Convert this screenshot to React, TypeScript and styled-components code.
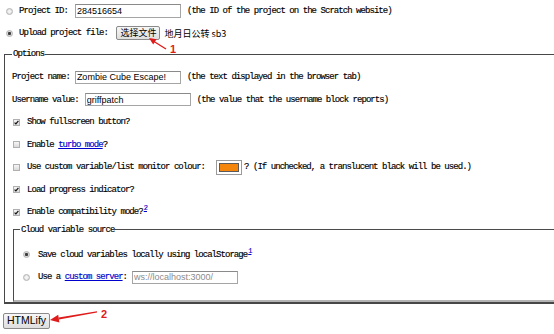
import React from 'react';
import styled, { createGlobalStyle } from 'styled-components';

const GlobalStyle = createGlobalStyle`
    html, body {
        margin: 0;
        padding: 0;
        overflow: hidden;
        background: #fff;
    }
    body {
        font-family: "Liberation Mono", monospace;
        font-size: 9px;
        letter-spacing: -0.95px;
        color: #000;
        -webkit-text-stroke: 0.15px #000;
    }
`;

const Page = styled.div`
    position: relative;
    width: 640px;
    height: 334px;
`;

const Row = styled.div<{ $h?: number }>`
    display: flex;
    align-items: center;
    height: ${(p) => p.$h ?? 22.5}px;
    white-space: nowrap;
`;

const Label = styled.span`
    white-space: pre;
`;

const Radio = styled.span<{ $checked?: boolean; $ml?: number; $mr?: number }>`
    display: inline-block;
    box-sizing: border-box;
    width: 7px;
    height: 7px;
    border-radius: 50%;
    border: 1px solid #b4b4b4;
    margin: 0 ${(p) => p.$mr ?? 6}px 0 ${(p) => p.$ml ?? 6}px;
    background: ${(p) =>
        p.$checked
            ? 'radial-gradient(circle, #3c3c3c 0 1.3px, #d8d8d8 1.8px)'
            : 'radial-gradient(circle, #f4f4f4 0 1px, #d6d6d6 3px)'};
`;

const Box = styled.span`
    display: inline-flex;
    align-items: center;
    justify-content: center;
    box-sizing: border-box;
    width: 7px;
    height: 7px;
    border: 1px solid #b0b0b0;
    background: linear-gradient(#f6f6f6, #dadada);
    margin: 0 7px 0 1px;
`;

const Check = ({ checked }: { checked?: boolean }) => (
    <Box>
        {checked && (
            <svg width="5" height="5" viewBox="0 0 5 5">
                <path d="M0.6 2.6 L1.9 3.9 L4.4 0.9" fill="none" stroke="#111" strokeWidth="1.2" />
            </svg>
        )}
    </Box>
);

const TextInput = styled.input<{ $ml?: number; $h?: number }>`
    box-sizing: border-box;
    width: 106px;
    height: ${(p) => p.$h ?? 13}px;
    margin: 0 6px 0 ${(p) => p.$ml ?? 6}px;
    padding: 0 1px;
    border: 1px solid #a5a5a5;
    border-top-color: #8a8a8a;
    font-family: "Liberation Sans", Arial, sans-serif;
    font-size: 9px;
    letter-spacing: 0;
    -webkit-text-stroke: 0;
    color: #000;
    outline: none;
    &::placeholder {
        color: #8c8c8c;
    }
`;

const PushButton = styled.button<{ $size: number; $h: number }>`
    box-sizing: border-box;
    height: ${(p) => p.$h}px;
    padding: 0 3px;
    border: 1px solid #8b8b8b;
    border-radius: 2px;
    background: linear-gradient(#f7f7f7, #dedede);
    font-family: "Liberation Sans", "Noto Sans CJK SC", sans-serif;
    font-size: ${(p) => p.$size}px;
    letter-spacing: 0;
    -webkit-text-stroke: 0;
    line-height: 1;
    color: #000;
`;

const FileName = styled.span`
    margin-left: 4px;
    font-family: "Noto Sans CJK SC", sans-serif;
    font-size: 9px;
    letter-spacing: 0;
    -webkit-text-stroke: 0;
`;

const Swatch = styled.span`
    display: inline-flex;
    box-sizing: border-box;
    width: 26px;
    height: 15px;
    padding: 2px;
    margin: 0 2px 0 11px;
    border: 1px solid #9a9a9a;
    background: #fff;
`;

const SwatchFill = styled.span<{ $color: string }>`
    flex: 1;
    border: 1px solid #5a5a5a;
    background: ${(p) => p.$color};
`;

const Link = styled.a`
    color: #0000cc;
    -webkit-text-stroke-color: #0000cc;
    text-decoration: underline;
`;

const Sup = styled.sup`
    font-size: 7px;
    line-height: 0;
    vertical-align: 4px;
    margin-left: 1px;
`;

const Options = styled.fieldset`
    min-width: 0;
    margin: 4px 0 0 4px;
    padding: 6px 0 0 7px;
    border: 1px solid #474747;
    border-bottom-width: 2px;
    border-right: none;
`;

const Legend = styled.legend`
    padding: 0 1px;
    line-height: 12px;
`;

const CloudSource = styled.fieldset`
    min-width: 0;
    margin: 0 0 0 1px;
    padding: 8px 0 11px 6px;
    border: none;
    border-top: 1px solid #4a4a4a;
    border-left: 1px solid #4a4a4a;
    border-bottom: 2px solid #b4b4b4;
`;

const Submit = styled.div`
    margin: 9px 0 0 3px;
`;

const Annotations = styled.svg`
    position: absolute;
    left: 0;
    top: 0;
    pointer-events: none;
`;

const Mark = styled.text`
    font-family: "Liberation Sans", Arial, sans-serif;
    font-weight: bold;
    font-size: 11px;
    letter-spacing: 0;
    -webkit-text-stroke: 0;
    fill: #e01b1b;
`;

const App: React.FC = () => (
    <Page>
        <GlobalStyle />

        <Row $h={22}>
            <Radio />
            <Label>Project ID:</Label>
            <TextInput $ml={7} $h={14} defaultValue="284516654" />
            <Label>(the ID of the project on the Scratch website)</Label>
        </Row>
        <Row $h={22}>
            <Radio $checked />
            <Label>Upload project file: </Label>
            <PushButton $size={9} $h={14} style={{ marginLeft: 4 }}>选择文件</PushButton>
            <FileName>地月日公转 sb3</FileName>
        </Row>

        <Options>
            <Legend>Options</Legend>
            <Row>
                <Label>Project name:</Label>
                <TextInput $ml={5} defaultValue="Zombie Cube Escape!" />
                <Label>(the text displayed in the browser tab)</Label>
            </Row>
            <Row>
                <Label>Username value:</Label>
                <TextInput defaultValue="griffpatch" />
                <Label>(the value that the username block reports)</Label>
            </Row>
            <Row>
                <Check checked />
                <Label>Show fullscreen button?</Label>
            </Row>
            <Row>
                <Check />
                <Label>
                    Enable <Link>turbo mode</Link>?
                </Label>
            </Row>
            <Row>
                <Check />
                <Label>Use custom variable/list monitor colour:</Label>
                <Swatch>
                    <SwatchFill $color="#f4860e" />
                </Swatch>
                <Label>? (If unchecked, a translucent black will be used.)</Label>
            </Row>
            <Row>
                <Check checked />
                <Label>Load progress indicator?</Label>
            </Row>
            <Row>
                <Check checked />
                <Label>
                    Enable compatibility mode?
                    <Sup>
                        <Link>2</Link>
                    </Sup>
                </Label>
            </Row>

            <CloudSource>
                <Legend>Cloud variable source</Legend>
                <Row>
                    <Radio $checked $ml={3} $mr={8} />
                    <Label>
                        Save cloud variables locally using localStorage
                        <Sup>
                            <Link>1</Link>
                        </Sup>
                    </Label>
                </Row>
                <Row>
                    <Radio $ml={3} $mr={8} />
                    <Label>
                        Use a <Link>custom server</Link>:
                    </Label>
                    <TextInput $ml={5} placeholder="ws://localhost:3000/" />
                </Row>
            </CloudSource>
        </Options>

        <Submit>
            <PushButton $size={10.5} $h={16}>HTMLify</PushButton>
        </Submit>

        <Annotations width="554" height="334" viewBox="0 0 554 334">
            <line x1="166" y1="49" x2="154" y2="41.5" stroke="#e01b1b" strokeWidth="1.4" />
            <polygon points="149,38 156.6,39.2 153.2,44.4" fill="#e01b1b" />
            <Mark x="170" y="53">1</Mark>

            <polygon points="97,311.2 97,312.6 59,319.6 58.6,317.6" fill="#e01b1b" />
            <polygon points="50,320 59.4,322.6 58.2,314.8" fill="#e01b1b" />
            <Mark x="101" y="318">2</Mark>
        </Annotations>
    </Page>
);

export default App;
